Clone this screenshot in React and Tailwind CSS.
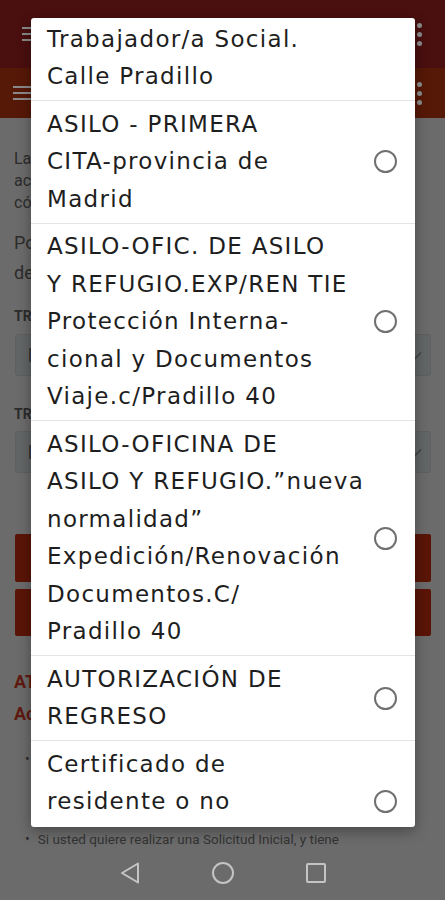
import React from "react";

const rows = [
  { lines: ["Trabajador/a Social.", "Calle Pradillo"], first: true, radio: false },
  { lines: ["ASILO - PRIMERA", "CITA-provincia de", "Madrid"], radio: true },
  {
    lines: [
      "ASILO-OFIC. DE ASILO",
      "Y REFUGIO.EXP/REN TIE",
      "Protección Interna-",
      "cional y Documentos",
      "Viaje.c/Pradillo 40",
    ],
    radio: true,
  },
  {
    lines: [
      "ASILO-OFICINA DE",
      "ASILO Y REFUGIO.\u201Dnueva",
      "normalidad\u201D",
      "Expedición/Renovación",
      "Documentos.C/",
      "Pradillo 40",
    ],
    radio: true,
  },
  { lines: ["AUTORIZACIÓN DE", "REGRESO"], radio: true },
  { lines: ["Certificado de", "residente o no", "residente"], radio: true, last: true },
];

function Hamburger() {
  return (
    <div className="flex flex-col gap-[4px]">
      <div className="h-[2px] w-[18px] bg-[#8a8a8a]" />
      <div className="h-[2px] w-[18px] bg-[#8a8a8a]" />
      <div className="h-[2px] w-[18px] bg-[#8a8a8a]" />
    </div>
  );
}

function Dots() {
  return (
    <div className="flex flex-col gap-[4px]">
      <div className="h-[5px] w-[5px] rounded-full bg-[#8e8e8e]" />
      <div className="h-[5px] w-[5px] rounded-full bg-[#8e8e8e]" />
      <div className="h-[5px] w-[5px] rounded-full bg-[#8e8e8e]" />
    </div>
  );
}

function Chevron() {
  return (
    <svg width="14" height="9" viewBox="0 0 14 9" fill="none">
      <path d="M1 1.5l6 6 6-6" stroke="#454545" strokeWidth="1.6" />
    </svg>
  );
}

export default function App() {
  return (
    <div className="relative w-[445px] h-[900px] overflow-hidden bg-[#6b6b6b] font-['Roboto',sans-serif]">
      {/* Page underneath (dimmed) */}
      <div className="flex flex-col h-full">
        <div className="h-[68px] bg-[#4a0f0f] flex items-center justify-between pl-[22px] pr-[23px]">
          <Hamburger />
          <Dots />
        </div>
        <div className="h-[50px] bg-[#561807] flex items-center justify-between pl-[13px] pr-[23px]">
          <Hamburger />
          <Dots />
        </div>
        <div className="flex flex-col px-[14px] text-[#2c2c2c]">
          <div className="mt-[30px] text-[16px] leading-[22px]">
            <div className="whitespace-nowrap">La Cita Previa es un servicio que le permite</div>
            <div className="whitespace-nowrap">acceder a los trámites de extranjería de forma</div>
            <div className="whitespace-nowrap">cómoda y sencilla.</div>
          </div>
          <div className="mt-[14px] text-[18px] leading-[30px]">
            <div className="whitespace-nowrap">Por favor, seleccione la provincia y el trámite</div>
            <div className="whitespace-nowrap">deseado.</div>
          </div>
          <div className="mt-[18px] text-[14px] font-bold leading-[20px]">TRÁMITES OFICINAS DE EXTRANJERÍA</div>
          <div className="mt-[8px] ml-[1px] h-[42px] bg-[#636666] border border-[#5e6060] rounded-[3px] flex items-center justify-between pl-[12px] pr-[8px]">
            <span className="text-[16px] text-[#222]">|</span>
            <Chevron />
          </div>
          <div className="mt-[28px] text-[14px] font-bold leading-[20px]">TRÁMITES POLICÍA NACIONAL</div>
          <div className="mt-[7px] ml-[1px] h-[42px] bg-[#636666] border border-[#5e6060] rounded-[3px] flex items-center justify-between pl-[12px] pr-[8px]">
            <span className="text-[16px] text-[#222]">|</span>
            <Chevron />
          </div>
          <div className="mt-[61px] ml-[1px] h-[48px] bg-[#5a1507] rounded-[2px] flex items-center justify-center text-[#9a9a9a] text-[16px]">
            Aceptar
          </div>
          <div className="mt-[7px] ml-[1px] h-[47px] bg-[#5a1507] rounded-[2px] flex items-center justify-center text-[#9a9a9a] text-[16px]">
            Salir
          </div>
          <div className="mt-[30px] text-[18px] font-bold leading-[32px] text-[#5f1a10]">
            <div className="whitespace-nowrap">ATENCIÓN</div>
            <div className="whitespace-nowrap">Acceso a la Cita Previa</div>
          </div>
          <ul className="mt-[19px] pl-[11px] text-[14px] leading-[20px] text-[#2c2c2c]">
            <li className="flex gap-[8px]">
              <span>•</span>
              <span className="whitespace-nowrap">Si usted quiere pedir cita para un trámite,</span>
            </li>
            <li className="flex gap-[8px] mt-[60px]">
              <span>•</span>
              <span className="whitespace-nowrap text-[13.5px] text-[#333]">Si usted quiere realizar una Solicitud Inicial, y tiene</span>
            </li>
          </ul>
        </div>
        <div className="mt-auto h-[50px] flex items-center justify-center gap-[70px] pb-[4px]">
          <svg width="22" height="24" viewBox="0 0 22 24" fill="none">
            <path d="M19 2.5L3 12l16 9.5z" stroke="#c4c4c4" strokeWidth="2" strokeLinejoin="round" />
          </svg>
          <svg width="24" height="24" viewBox="0 0 24 24" fill="none">
            <circle cx="12" cy="12" r="10" stroke="#c4c4c4" strokeWidth="2" />
          </svg>
          <svg width="22" height="22" viewBox="0 0 22 22" fill="none">
            <rect x="2" y="2" width="18" height="18" rx="1" stroke="#c4c4c4" strokeWidth="2" />
          </svg>
        </div>
      </div>

      {/* Dialog */}
      <div className="absolute left-[31px] top-[18px] w-[384px] h-[809px] bg-white rounded-[3px] shadow-[0_4px_14px_rgba(0,0,0,0.35)] overflow-hidden font-['DejaVu_Sans',sans-serif] text-[#1e1e1e]">
        {rows.map((r, i) => (
          <div
            key={i}
            className={
              "flex items-center justify-between pl-[16px] pr-[18px] " +
              (r.first ? "pt-[2.5px] pb-[4.5px] " : "py-[4.5px] ") +
              (r.last ? "" : "border-b border-[#e4e4e4]")
            }
          >
            <div className="text-[23px] leading-[37.5px] tracking-[1.3px]">
              {r.lines.map((l, j) => (
                <div key={j} className="whitespace-nowrap">
                  {l}
                </div>
              ))}
            </div>
            {r.radio && (
              <div className="w-[23px] h-[23px] rounded-full border-2 border-[#707070] shrink-0" />
            )}
          </div>
        ))}
      </div>
    </div>
  );
}
